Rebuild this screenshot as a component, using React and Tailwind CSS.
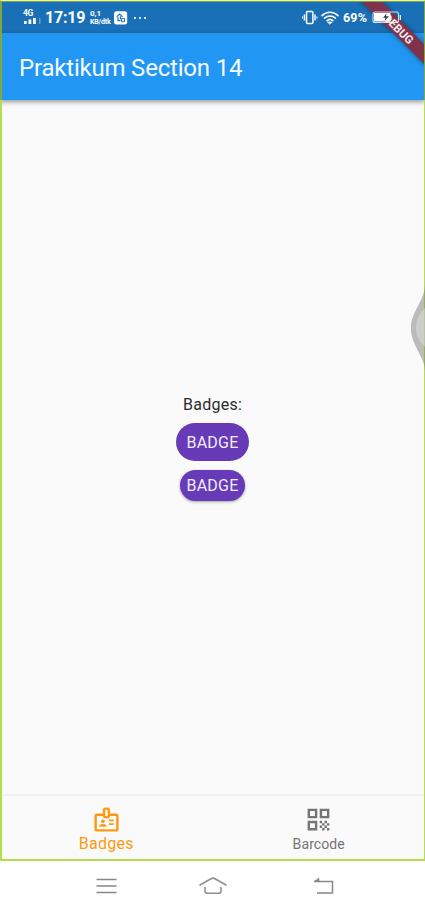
import React from "react";
import { MdOutlineBadge, MdQrCode } from "react-icons/md";

function StatusBar() {
  return (
    <div className="flex h-[33px] shrink-0 items-center bg-[#1a70b7] pt-[2px] pl-[23px] text-white">
      <div className="flex w-[18px] flex-col">
        <span className="h-[8px] text-[8.5px] leading-[7px] font-bold tracking-[-0.5px]">4G</span>
        <svg width="18" height="8" viewBox="0 0 18 8" fill="#fff">
          <rect x="1" y="3" width="2.6" height="3" />
          <rect x="5.5" y="1.5" width="2.8" height="4.500" />
          <rect x="10" y="0" width="2.8" height="6" />
          <rect x="16" y="0" width="1.5" height="6" opacity=".3" />
        </svg>
      </div>
      <span className="ml-[4px] w-[41px] text-[16px] leading-[20px] font-bold tracking-[-0.2px] whitespace-nowrap">17:19</span>
      <div className="ml-[4px] flex w-[22px] flex-col text-[7px] leading-[8px] font-bold whitespace-nowrap">
        <span className="h-[8px] text-[8px]">0,1</span>
        <span className="h-[8px] tracking-[-0.15px]">KB/dtk</span>
      </div>
      <svg className="ml-[2px]" width="14" height="14" viewBox="0 0 14 14">
        <rect x="0" y="0.3" width="13.2" height="13.2" rx="2.500" fill="#fff" />
        <path d="M2.600 5.800 5.600 3l3 2.800M4 6v3.600h2.400M6.400 5.200v3" fill="none" stroke="#1a70b7" strokeWidth="1.1" />
        <circle cx="9" cy="9" r="1.700" fill="none" stroke="#1a70b7" strokeWidth="1.100" />
      </svg>
      <svg className="ml-[5px]" width="15" height="4" viewBox="0 0 15 4" fill="#fff">
        <circle cx="2" cy="2" r="1.1" />
        <circle cx="7" cy="2" r="1.1" />
        <circle cx="12" cy="2" r="1.1" />
      </svg>
      <svg className="ml-auto" width="16" height="16" viewBox="0 0 16 16" fill="none" stroke="#fff">
        <rect x="4.500" y="1.500" width="6.4" height="12" rx="1" strokeWidth="1.5" />
        <path d="M2.400 4.500v6M13 4.500v6" strokeWidth="1.4" />
        <path d="M.6 6.500v2M14.900 6.500v2" strokeWidth="1" />
      </svg>
      <svg className="ml-[3px]" width="18" height="14" viewBox="0 0 18 14" fill="none" stroke="#fff" strokeWidth="1.6" strokeLinecap="round">
        <path d="M1 4.6C5.5.2 12.500.2 17 4.600M3.600 7.200c3-2.900 7.800-2.900 10.800 0M6.200 9.700c1.600-1.500 4-1.500 5.600 0" />
        <path d="M6.800 11h4.400L9 13z" fill="#fff" strokeWidth=".8" />
      </svg>
      <span className="ml-[4px] w-[26px] text-[12.5px] leading-[16px] font-bold tracking-[0.2px] whitespace-nowrap">69%</span>
      <svg className="relative z-30 mr-[23px] ml-[3px]" width="30" height="14" viewBox="0 0 30 14">
        <rect x="1" y="1" width="25.500" height="10.500" rx="2" fill="none" stroke="#fff" strokeOpacity=".8" strokeWidth="1.100" />
        <rect x="2" y="2" width="16.500" height="8.500" fill="#fff" />
        <path d="M28.300 4v5" stroke="#fff" strokeWidth="1.200" />
        <path d="m14.500 2.500-3.500 4.200h2.500L12.600 10l4.400-4.700h-3z" fill="#343d45" />
      </svg>
    </div>
  );
}

function DebugBanner() {
  return (
    <svg className="pointer-events-none absolute top-[1px] right-[1px] z-20" width="66" height="75" viewBox="0 -1 66 75">
      <defs>
        <filter id="bannerShadow" x="-20%" y="-20%" width="140%" height="140%">
          <feDropShadow dx="0" dy="0" stdDeviation="2.500" floodColor="#000" floodOpacity=".45" />
        </filter>
      </defs>
      <path d="M-1-2 67 66V46L19-2z" transform="translate(1 -2)" fill="#7e304c" filter="url(#bannerShadow)" />
      <text x="40.500" y="31" transform="rotate(45 40.5 27)" textAnchor="middle" fill="#f3e8ed" fontFamily="Roboto, sans-serif" fontSize="11.500" fontWeight="700" textLength="37" lengthAdjust="spacingAndGlyphs">DEBUG</text>
    </svg>
  );
}

function EdgeHandle() {
  return (
    <svg className="pointer-events-none absolute top-[285px] right-0 z-40" width="15" height="86" viewBox="0 0 15 86">
      <path d="M15 0C14.500 8 12 13 9 19C5 27 .8 34 .8 43S5 60 9 68C12 74 14.500 78 15 86z" fill="#777" fillOpacity=".48" />
      <path d="M15 23C9 29 6 35 6 43s3 13 9 19z" fill="#e6e6e6" fillOpacity=".42" />
    </svg>
  );
}

function SystemNav() {
  return (
    <div className="flex h-[46px] shrink-0 items-center justify-between bg-white pt-[4px] pr-[90px] pl-[96px]">
      <svg width="21" height="18" viewBox="0 0 21 18" stroke="#888" strokeWidth="1.500">
        <path d="M.5 2.500h20M.5 9h20M.5 15.500h20" />
      </svg>
      <svg className="mr-[5px]" width="30" height="20" viewBox="0 0 30 20" fill="none" stroke="#909090" strokeWidth="1.600" strokeLinecap="round" strokeLinejoin="round">
        <path d="M2 9 13 2.700Q15 1.500 17 2.700L28 9M7 11.500V15Q7 17.200 9 17.200h12q2 0 2-2.200v-3.500" />
      </svg>
      <svg width="22" height="18" viewBox="0 0 22 18" fill="none" stroke="#888" strokeWidth="1.500">
        <path d="M1 4.500h18.500V16H4" />
        <path d="M1 4.500 6 1v3.500z" fill="#888" strokeWidth=".6" />
      </svg>
    </div>
  );
}

export default function App() {
  return (
    <div className="relative flex h-[907px] w-[425px] flex-col overflow-hidden bg-white font-['Roboto',sans-serif]">
      <div className="flex h-[861px] shrink-0 flex-col bg-[#fafafa]">
        <StatusBar />
        <header className="z-10 flex h-[67px] shrink-0 items-center bg-[#2196f3] pl-[19px] shadow-[0_2px_5px_rgba(0,0,0,0.4)]">
          <h1 className="mt-[2px] text-[24px] leading-[32px] font-normal tracking-[-0.2px] whitespace-nowrap text-[#f4faff]">
            Praktikum Section 14
          </h1>
        </header>
        <main className="flex flex-1 flex-col items-center pt-[295px]">
          <p className="text-[16px] leading-[20px] tracking-[0.25px] text-[#2c2c2c]">Badges:</p>
          <span className="mt-[8px] flex h-[38px] w-[73px] items-center justify-center rounded-full bg-[#673ab7] pt-[1px] text-[16px] tracking-[0.2px] text-[#f1edf8]">
            BADGE
          </span>
          <span className="mt-[9px] flex h-[31px] w-[65px] items-center justify-center rounded-full bg-[#673ab7] text-[16px] tracking-[0.2px] text-[#f1edf8] shadow-[0_1px_3px_rgba(0,0,0,0.35)]">
            BADGE
          </span>
        </main>
        <nav className="flex h-[67px] shrink-0 border-t-2 border-[#f1f1f1]">
          <div className="flex flex-1 flex-col items-center pt-[9px] text-[#ff9811]">
            <MdOutlineBadge size={29} />
            <span className="text-[16px] leading-[19px] tracking-[0.3px]">Badges</span>
          </div>
          <div className="flex flex-1 flex-col items-center pt-[9px] text-[#757575]">
            <MdQrCode size={29} />
            <span className="mt-px text-[14px] leading-[18px] tracking-[0.1px]">Barcode</span>
          </div>
        </nav>
      </div>
      <SystemNav />
      <DebugBanner />
      <div className="pointer-events-none absolute top-0 left-0 z-30 h-[861px] w-[425px] border-t border-r border-b-2 border-l-2 border-[#b5dc4c] border-t-[#e4f2bd]" />
      <div className="pointer-events-none absolute top-px left-0 z-30 h-[99px] w-[425px] border-t border-r border-l-2 border-[#7fa83a]" />
      <EdgeHandle />
    </div>
  );
}
